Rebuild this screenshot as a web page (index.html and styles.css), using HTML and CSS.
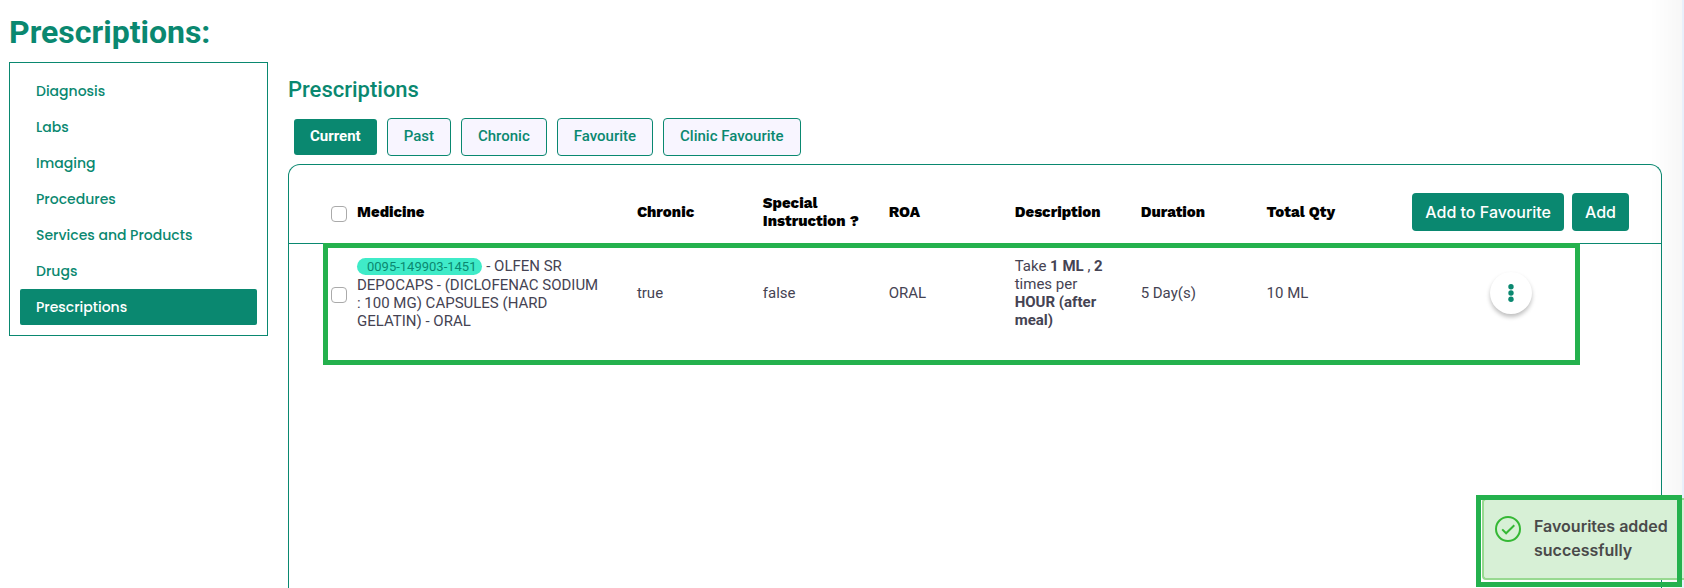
FILE: index.html
```html
<!DOCTYPE html>
<html lang="en">

<head>
    <meta charset="UTF-8">
    <meta name="viewport" content="width=device-width, initial-scale=1.0">
    <title>Prescriptions</title>
    <link rel="stylesheet" href="styles.css">
</head>

<body>
    <h1 class="page-title">Prescriptions:</h1>

    <div class="layout">
        <nav class="sidebar">
            <a class="sidebar-link" href="#diagnosis">Diagnosis</a>
            <a class="sidebar-link" href="#labs">Labs</a>
            <a class="sidebar-link" href="#imaging">Imaging</a>
            <a class="sidebar-link" href="#procedures">Procedures</a>
            <a class="sidebar-link" href="#services">Services and Products</a>
            <a class="sidebar-link" href="#drugs">Drugs</a>
            <a class="sidebar-link active" href="#prescriptions">Prescriptions</a>
        </nav>

        <main class="content">
            <h2 class="section-title">Prescriptions</h2>

            <div class="tabs">
                <button type="button" class="tab active">Current</button>
                <button type="button" class="tab">Past</button>
                <button type="button" class="tab">Chronic</button>
                <button type="button" class="tab">Favourite</button>
                <button type="button" class="tab">Clinic Favourite</button>
            </div>

            <section class="panel">
                <table class="med-table">
                    <thead>
                        <tr>
                            <th class="col-check"><input type="checkbox" class="check" aria-label="Select all"></th>
                            <th class="col-medicine">Medicine</th>
                            <th class="col-data">Chronic</th>
                            <th class="col-data">Special Instruction ?</th>
                            <th class="col-data">ROA</th>
                            <th class="col-data">Description</th>
                            <th class="col-data">Duration</th>
                            <th class="col-data">Total Qty</th>
                            <th class="col-actions">
                                <div class="actions">
                                    <button type="button" class="btn">Add to Favourite</button>
                                    <button type="button" class="btn">Add</button>
                                </div>
                            </th>
                        </tr>
                    </thead>
                    <tbody>
                        <tr>
                            <td class="col-check"><input type="checkbox" class="check" aria-label="Select OLFEN SR"></td>
                            <td class="cell-medicine"><span class="code">0095-149903-1451</span> - OLFEN SR DEPOCAPS - (DICLOFENAC SODIUM : 100 MG) CAPSULES (HARD GELATIN) - ORAL</td>
                            <td>true</td>
                            <td>false</td>
                            <td>ORAL</td>
                            <td>Take <b>1 ML</b> , <b>2</b> times per <b>HOUR (after meal)</b></td>
                            <td>5 Day(s)</td>
                            <td>10 ML</td>
                            <td class="col-menu">
                                <button type="button" class="menu-btn" aria-label="More actions">
                                    <svg width="6" height="18" viewBox="0 0 6 18">
                                        <circle cx="3" cy="2.8" r="2.7" />
                                        <circle cx="3" cy="9" r="2.7" />
                                        <circle cx="3" cy="15.2" r="2.7" />
                                    </svg>
                                </button>
                            </td>
                        </tr>
                    </tbody>
                </table>
                <div class="row-highlight"></div>
            </section>
        </main>
    </div>

    <div class="edge"></div>

    <div class="toast" role="status">
        <svg class="toast-icon" width="26" height="26" viewBox="0 0 26 26">
            <circle cx="13" cy="13" r="12" />
            <path d="M7.2 13.4l3.9 3.9 8.2-8" />
        </svg>
        <p class="toast-text">Favourites added successfully</p>
    </div>
    <div class="toast-highlight"></div>
</body>

</html>
```

FILE: styles.css
```css
* {
    box-sizing: border-box;
}

body {
    min-height: 100vh;
    margin: 0;
    padding: 12px 22px 0 9px;
    display: flex;
    flex-direction: column;
    overflow: hidden;
    font-family: Roboto, sans-serif;
    color: #454353;
    background: #fff;
}

button {
    font-family: inherit;
    cursor: pointer;
}

.page-title {
    margin: 0 0 10px;
    font-size: 32px;
    line-height: 40px;
    font-weight: 700;
    color: #0a8870;
}

.layout {
    flex: 1;
    display: flex;
    gap: 20px;
}

/* sidebar */
.sidebar {
    width: 259px;
    flex-shrink: 0;
    align-self: flex-start;
    padding: 10px;
    border: 1px solid #0a8870;
}

.sidebar-link {
    display: block;
    padding: 0 16px;
    border-radius: 2px;
    font-family: Poppins, Inter, sans-serif;
    font-size: 14px;
    line-height: 36px;
    font-weight: 500;
    color: #0a8870;
    text-decoration: none;
}

.sidebar-link.active {
    color: #fff;
    background: #0a8870;
}

/* content */
.content {
    flex: 1;
    min-width: 0;
    padding-top: 12px;
    display: flex;
    flex-direction: column;
}

.section-title {
    margin: 0 0 12px;
    font-size: 22px;
    line-height: 32px;
    font-weight: 500;
    color: #0a8870;
}

.tabs {
    display: flex;
    align-items: center;
    gap: 10px;
    padding-left: 6px;
    margin-bottom: 8px;
}

.tab {
    height: 38px;
    padding: 0 16px 2px;
    border: 1px solid #0a8870;
    border-radius: 4px;
    font-size: 15px;
    font-weight: 500;
    color: #0a8870;
    background: #f8f5ff;
}

.tab.active {
    height: 36px;
    border: 0;
    border-radius: 3px;
    font-weight: 700;
    color: #fff;
    background: #0a8870;
}

.panel {
    position: relative;
    flex: 1;
    border: 1px solid #0a8870;
    border-bottom: 0;
    border-radius: 12px 12px 0 0;
}

.med-table {
    width: 100%;
    table-layout: fixed;
    border-collapse: separate;
    border-spacing: 0;
    font-size: 15px;
    line-height: 18px;
}

.med-table th {
    height: 79px;
    padding: 16px 24px 0 0;
    border-bottom: 1px solid #0a8870;
    font-family: "Work Sans", Inter, sans-serif;
    font-size: 15px;
    font-weight: 800;
    text-align: left;
    color: #000;
}

.med-table td {
    height: 98px;
    padding: 0 24px 0 0;
}

.med-table .cell-medicine {
    padding-right: 34px;
}

.med-table .col-check {
    width: 68px;
    padding-left: 42px;
    padding-right: 0;
}

.col-medicine {
    width: 20.4%;
}

.med-table .col-data {
    width: 9.18%;
    padding-right: 16px;
}

.med-table .col-actions {
    padding-right: 32px;
}

.check {
    display: block;
    appearance: none;
    width: 16px;
    height: 16px;
    margin: 4px 0 0;
    border: 1px solid #aaa;
    border-radius: 4px;
    background: #fff;
}

.code {
    padding: 1px 6px 1px 10px;
    border-radius: 9px;
    font-size: 13px;
    color: #0a8870;
    background: #3febc8;
}

.actions {
    display: flex;
    justify-content: flex-end;
    gap: 8px;
}

.btn {
    height: 38px;
    padding: 0 13px;
    border: 0;
    border-radius: 4px;
    font-family: Inter, sans-serif;
    font-size: 16px;
    font-weight: 500;
    white-space: nowrap;
    color: #fff;
    background: #0a8870;
}

.menu-btn {
    display: flex;
    align-items: center;
    justify-content: center;
    width: 42px;
    height: 42px;
    margin: 0 0 0 auto;
    padding: 0;
    border: 0;
    border-radius: 50%;
    background: #fff;
    box-shadow: 0 3px 4px rgba(0, 0, 0, 0.25);
    fill: #0a8870;
}

.med-table .col-menu {
    padding-right: 129px;
}

/* frame over the new row */
.row-highlight {
    position: absolute;
    top: 78px;
    left: 34px;
    right: 81px;
    height: 122px;
    border: 5px solid #24b14d;
    pointer-events: none;
}

/* shaded strip on the right side of the window */
.edge {
    position: fixed;
    top: 0;
    right: 0;
    bottom: 0;
    width: 34px;
    border-right: 2px solid #e8f0fb;
    background: linear-gradient(to right, rgba(0, 0, 0, 0), rgba(0, 0, 0, 0.03));
    pointer-events: none;
}

/* toast */
.toast {
    position: fixed;
    right: 0;
    bottom: 8px;
    width: 202px;
    height: 82px;
    display: flex;
    gap: 13px;
    padding: 14px 0 0 11px;
    border: 2px solid #97d990;
    border-right: 0;
    border-radius: 4px 0 0 4px;
    background: #d7f0d6;
}

.toast-icon {
    flex-shrink: 0;
    margin-top: 2px;
    fill: none;
    stroke: #35b835;
    stroke-width: 2;
}

.toast-text {
    margin: 0;
    font-family: Inter, sans-serif;
    font-size: 16px;
    line-height: 24px;
    font-weight: 600;
    color: #4a4a4a;
}

.toast-highlight {
    position: fixed;
    right: 2px;
    bottom: 1px;
    width: 206px;
    height: 92px;
    border: 5px solid #24b14d;
    pointer-events: none;
}
```
